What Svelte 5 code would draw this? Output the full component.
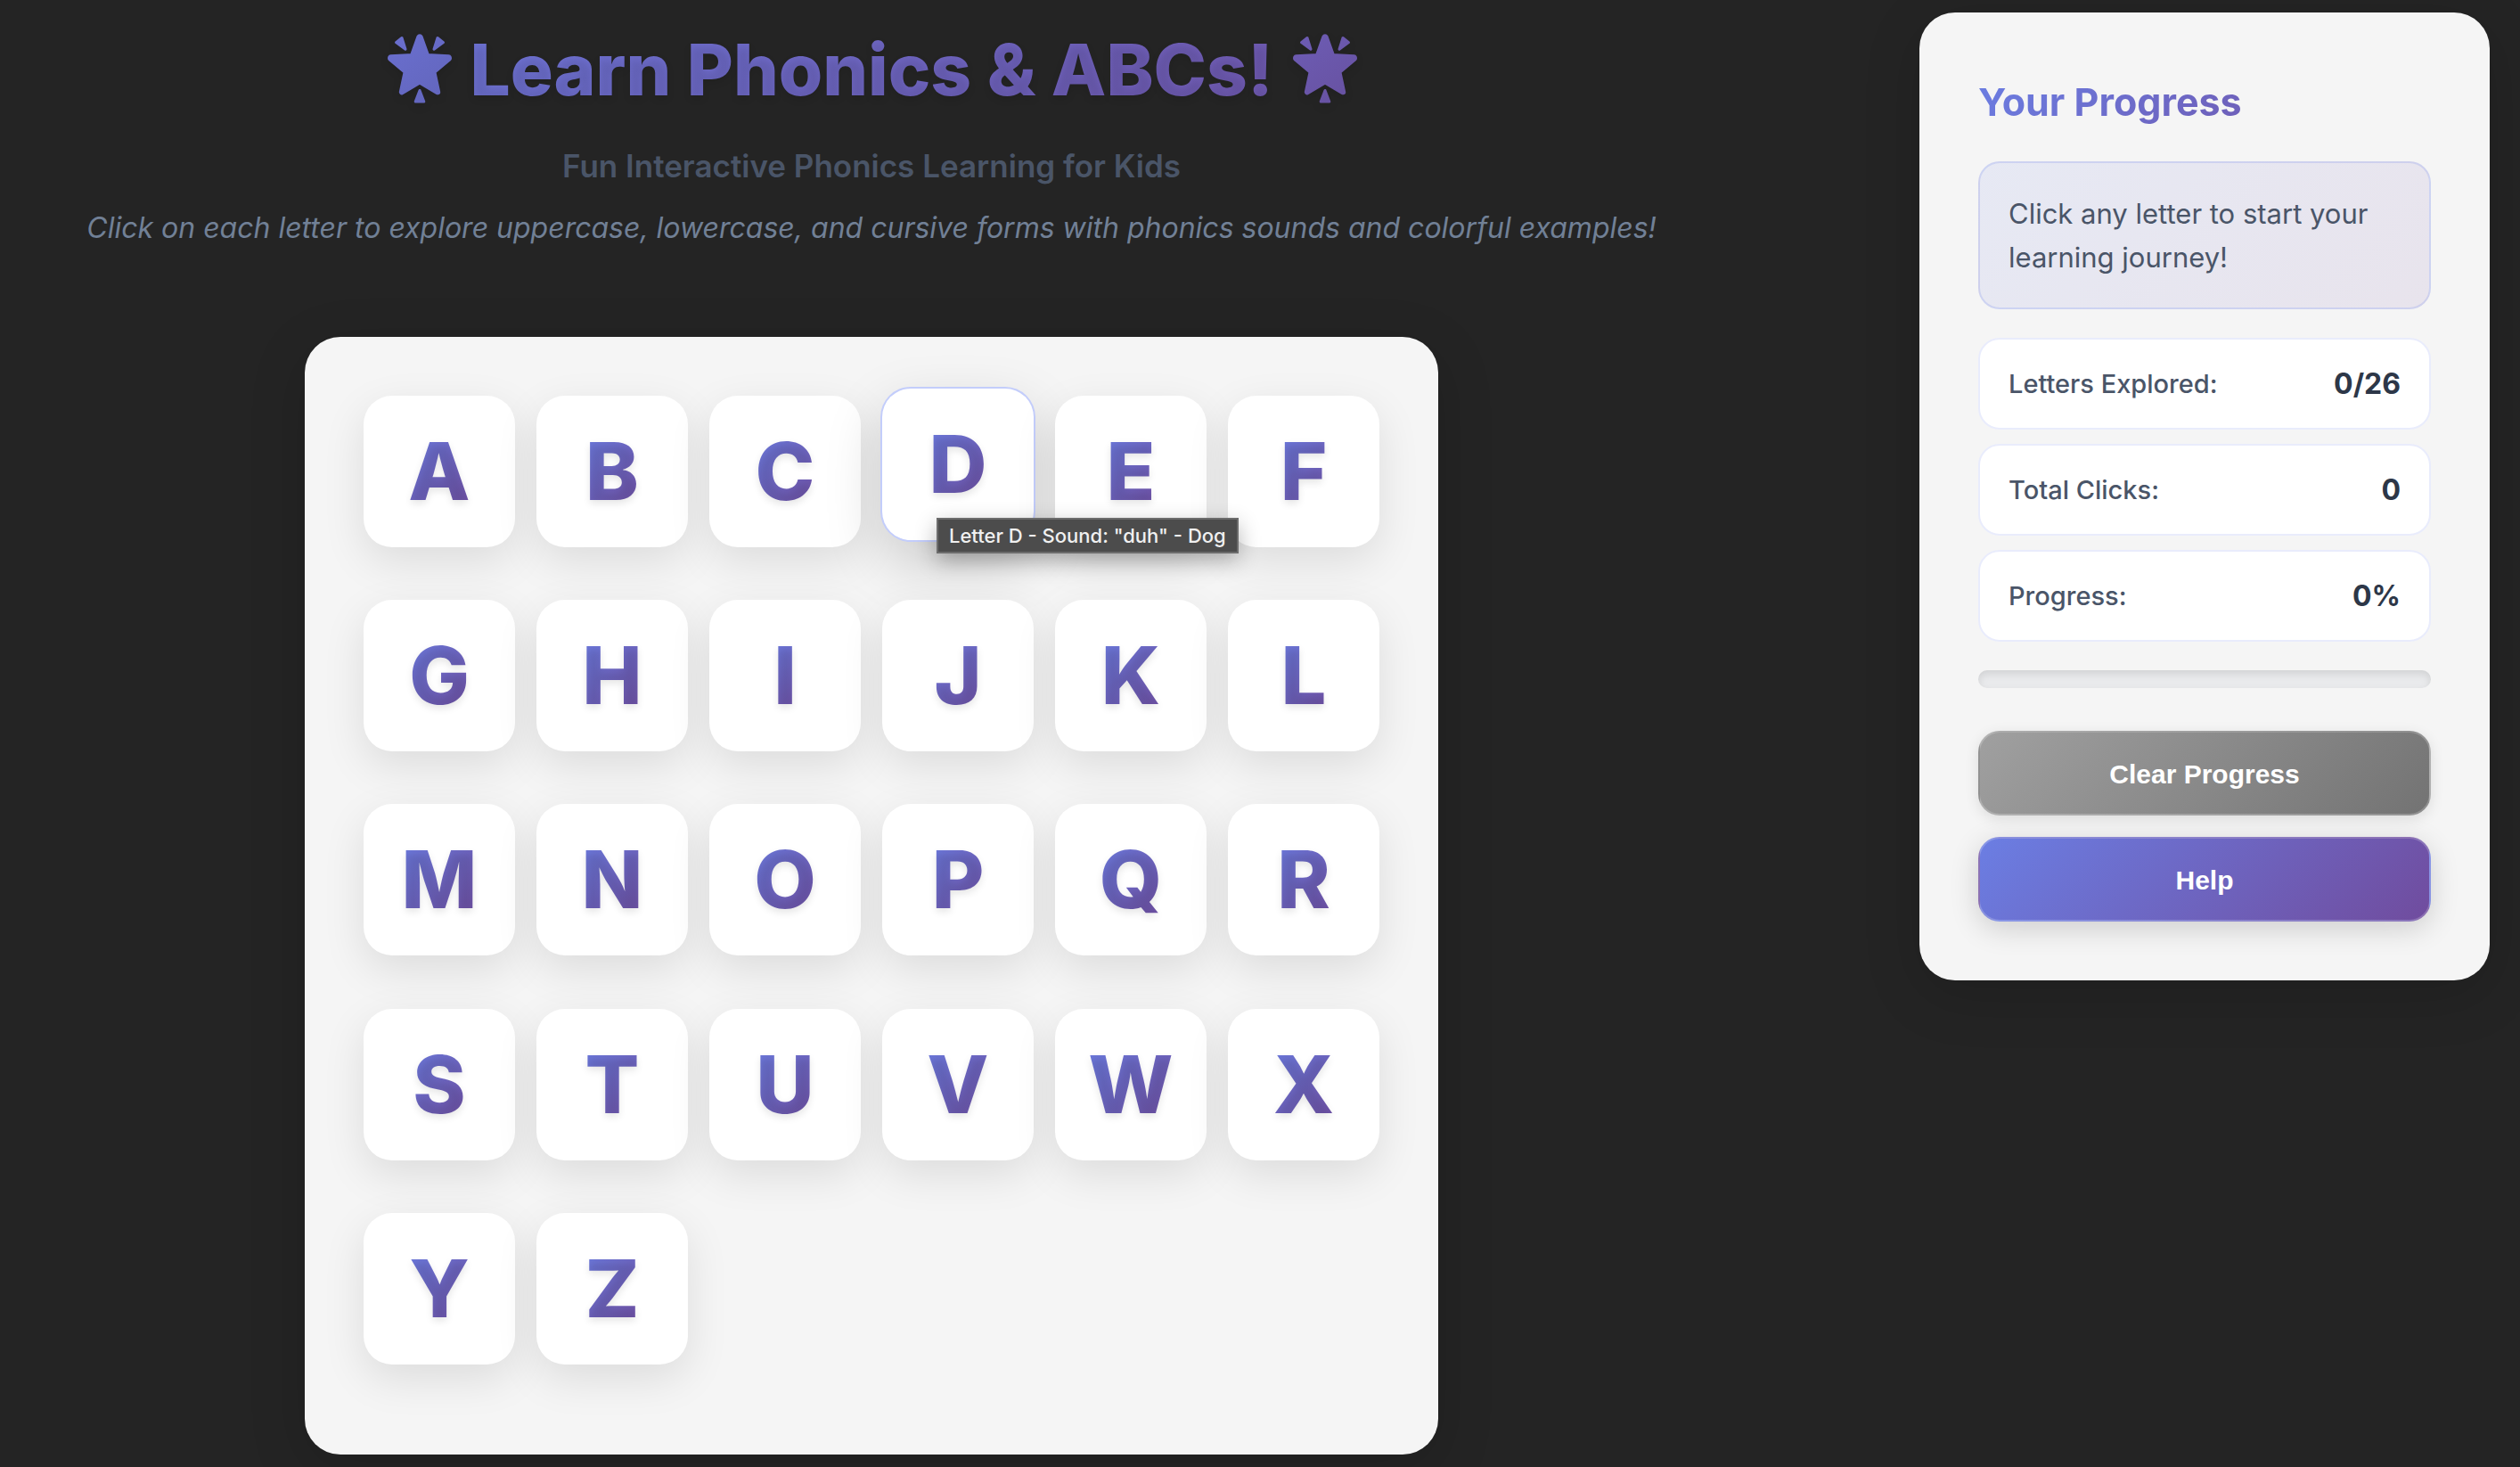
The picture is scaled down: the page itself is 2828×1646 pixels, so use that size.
<script>
  const letters = 'ABCDEFGHIJKLMNOPQRSTUVWXYZ'.split('');
  const total = letters.length;
  let active = $state('D');
  let clicks = $state(0);
  let explored = $state([]);
  let percent = $derived(Math.round((explored.length / total) * 100));

  function pick(letter) {
    active = letter;
    clicks += 1;
    if (!explored.includes(letter)) explored = [...explored, letter];
  }

  function clear() {
    clicks = 0;
    explored = [];
  }
</script>

{#snippet star(side)}
  <svg class="star" viewBox="0 0 100 100" aria-hidden="true">
    <defs>
      <linearGradient id="star-{side}" gradientUnits="userSpaceOnUse" x1="20" y1="10" x2="80" y2="90">
        <stop offset="0" class="{side}-from" />
        <stop offset="1" class="{side}-to" />
      </linearGradient>
    </defs>
    <g fill="url(#star-{side})" stroke="url(#star-{side})" stroke-linejoin="round">
      <path stroke-width="6" d="M50.200 14 Q51 12.500 51.800 14 L59.300 35 L83.500 36.200 Q84.500 37 83.600 38 L66.300 52.500 L71.200 75.300 L51 63.500 L30.800 75.300 L35.700 52.500 L18.400 38 Q17.500 37 18.500 36.200 L42.700 35 Z" />
      <path stroke-width="3" d="M31 14.500 L35 27.300 L24.500 19.600 Z M71 14.500 L67 27.300 L77.500 19.600 Z M51 73.500 L55.800 86 L46.200 86 Z" />
    </g>
  </svg>
{/snippet}

<div class="page">
  <main>
    <header>
      <h1>{@render star('left')}<span>Learn Phonics &amp; ABCs!</span>{@render star('right')}</h1>
      <p class="subtitle">Fun Interactive Phonics Learning for Kids</p>
      <p class="hint">Click on each letter to explore uppercase, lowercase, and cursive forms with phonics sounds and colorful examples!</p>
    </header>

    <section class="board" aria-label="Alphabet">
      {#each letters as letter}
        <div class="cell">
          <button class="card" class:active={letter === active} onclick={() => pick(letter)}>
            <span>{letter}</span>
          </button>
          {#if letter === 'D'}
            <div class="tip" role="tooltip">Letter D - Sound: "duh" - Dog</div>
          {/if}
        </div>
      {/each}
    </section>
  </main>

  <aside>
    <h2>Your Progress</h2>
    <p class="info">Click any letter to start your learning journey!</p>
    <dl>
      <div><dt>Letters Explored:</dt><dd>{explored.length}/{total}</dd></div>
      <div><dt>Total Clicks:</dt><dd>{clicks}</dd></div>
      <div><dt>Progress:</dt><dd>{percent}%</dd></div>
    </dl>
    <progress max="100" value={percent} aria-label="Progress"></progress>
    <div class="actions">
      <button class="action clear" onclick={clear}>Clear Progress</button>
      <button class="action help">Help</button>
    </div>
  </aside>
</div>

<style>
  :global(body) {
    margin: 0;
    background: #242424;
    font-family: Inter, 'Liberation Sans', sans-serif;
  }

  .page {
    box-sizing: border-box;
    min-height: 100vh;
    padding: 14px 34px;
    display: flex;
    gap: 232px;
  }

  h1, h2, p, dl, dd {
    margin: 0;
  }

  main {
    flex: 1;
    min-width: 0;
    display: flex;
    flex-direction: column;
    align-items: center;
    gap: 96px;
  }

  header {
    width: 100%;
    padding-top: 16px;
    text-align: center;
  }

  h1 {
    display: flex;
    justify-content: center;
    align-items: center;
    gap: 7px;
    font-size: 80px;
    line-height: 96px;
    font-weight: 800;
    color: transparent;
    background: linear-gradient(135deg, #6b7ee3 0%, #704c9e 100%);
    background-clip: text;
    -webkit-background-clip: text;
    text-shadow: 0 4px 8px rgba(0, 0, 0, 0.1);
  }

  .star {
    width: 100px;
    height: 100px;
    margin: -2px 0;
    filter: drop-shadow(0 4px 4px rgba(0, 0, 0, 0.1));
  }

  .left-from { stop-color: #6a6fcf; }
  .left-to { stop-color: #6265bb; }
  .right-from { stop-color: #6d5cb4; }
  .right-to { stop-color: #6751a0; }

  .subtitle {
    margin-top: 32px;
    font-size: 35px;
    line-height: 56px;
    font-weight: 600;
    color: #4a5568;
  }

  .hint {
    margin-top: 16px;
    font-size: 32px;
    line-height: 52px;
    font-style: italic;
    color: #718096;
  }

  .board {
    box-sizing: border-box;
    width: 100%;
    max-width: 1272px;
    flex: 1;
    padding: 66px;
    display: grid;
    grid-template-columns: repeat(6, 1fr);
    grid-auto-rows: 1fr;
    gap: 24px;
    border-radius: 40px;
    background: #f5f5f5;
    box-shadow: 0 16px 64px rgba(0, 0, 0, 0.15);
  }

  .cell {
    position: relative;
  }

  .card {
    position: relative;
    width: 100%;
    aspect-ratio: 1;
    padding: 0;
    display: flex;
    justify-content: center;
    align-items: center;
    border: 0;
    border-radius: 32px;
    background: #fff;
    box-shadow: 0 16px 48px rgba(0, 0, 0, 0.1);
    font: 800 90px/108px Inter, 'Liberation Sans', sans-serif;
    cursor: pointer;
  }

  .card span {
    color: transparent;
    background: linear-gradient(135deg, #6b7ee3 0%, #704c9e 100%);
    background-clip: text;
    -webkit-background-clip: text;
    text-shadow: 0 4px 8px rgba(0, 0, 0, 0.1);
  }

  .active {
    top: -8px;
    box-shadow: 0 0 0 2px #c3cdfb, 0 24px 64px rgba(0, 0, 0, 0.18);
  }

  .tip {
    position: absolute;
    z-index: 2;
    left: 61px;
    top: 137px;
    padding: 5px 12px;
    border: 2px solid #6c6c6c;
    background: #4c4c4c;
    box-shadow: 0 8px 24px rgba(0, 0, 0, 0.3);
    color: #f0f0f0;
    font-size: 22px;
    font-weight: 500;
    line-height: 26px;
    white-space: nowrap;
  }

  aside {
    box-sizing: border-box;
    width: 640px;
    flex: none;
    align-self: flex-start;
    padding: 66px;
    border-radius: 40px;
    background: #f5f5f5;
    box-shadow: 0 16px 64px rgba(0, 0, 0, 0.15);
  }

  h2 {
    margin-bottom: 32px;
    font-size: 43px;
    line-height: 69px;
    font-weight: 700;
    color: transparent;
    background: linear-gradient(135deg, #6b7ee3 0%, #704c9e 100%);
    background-clip: text;
    -webkit-background-clip: text;
  }

  .info {
    padding: 32px;
    border: 2px solid rgba(102, 126, 234, 0.2);
    border-radius: 24px;
    background: linear-gradient(135deg, rgba(102, 126, 234, 0.1), rgba(118, 75, 162, 0.1));
    color: #4a5568;
    font-size: 31px;
    line-height: 49px;
  }

  dl {
    margin: 32px 0;
    display: grid;
    gap: 16px;
  }

  dl div {
    padding: 24px 32px;
    display: flex;
    justify-content: space-between;
    align-items: center;
    border: 2px solid #e9ecfc;
    border-radius: 24px;
    background: #fff;
    line-height: 51px;
  }

  dt {
    color: #4a5568;
    font-size: 29px;
    font-weight: 500;
  }

  dd {
    color: #2d3748;
    font-size: 32px;
    font-weight: 700;
  }

  progress {
    display: block;
    width: 100%;
    height: 20px;
    appearance: none;
    -webkit-appearance: none;
    border: 0;
    border-radius: 10px;
    overflow: hidden;
    background: #e9eaec;
    box-shadow: inset 0 4px 8px rgba(0, 0, 0, 0.1);
  }

  progress::-webkit-progress-bar {
    background: transparent;
  }

  progress::-webkit-progress-value {
    background: linear-gradient(90deg, #6b7ee3, #704c9e);
  }

  .actions {
    margin-top: 48px;
    display: grid;
    gap: 24px;
  }

  .action {
    padding: 30px 32px 28px;
    border: 2px solid rgba(255, 255, 255, 0.2);
    border-radius: 24px;
    color: #fff;
    font: 700 30px/33px 'Liberation Sans', Arial, sans-serif;
    cursor: pointer;
  }

  .clear {
    background-image: linear-gradient(135deg, #a0a0a0, #737373);
    box-shadow: 0 4px 16px rgba(0, 0, 0, 0.1);
  }

  .help {
    background-image: linear-gradient(135deg, #6b7ee3 0%, #704c9e 100%);
    box-shadow: 0 8px 32px rgba(0, 0, 0, 0.16);
  }
</style>
